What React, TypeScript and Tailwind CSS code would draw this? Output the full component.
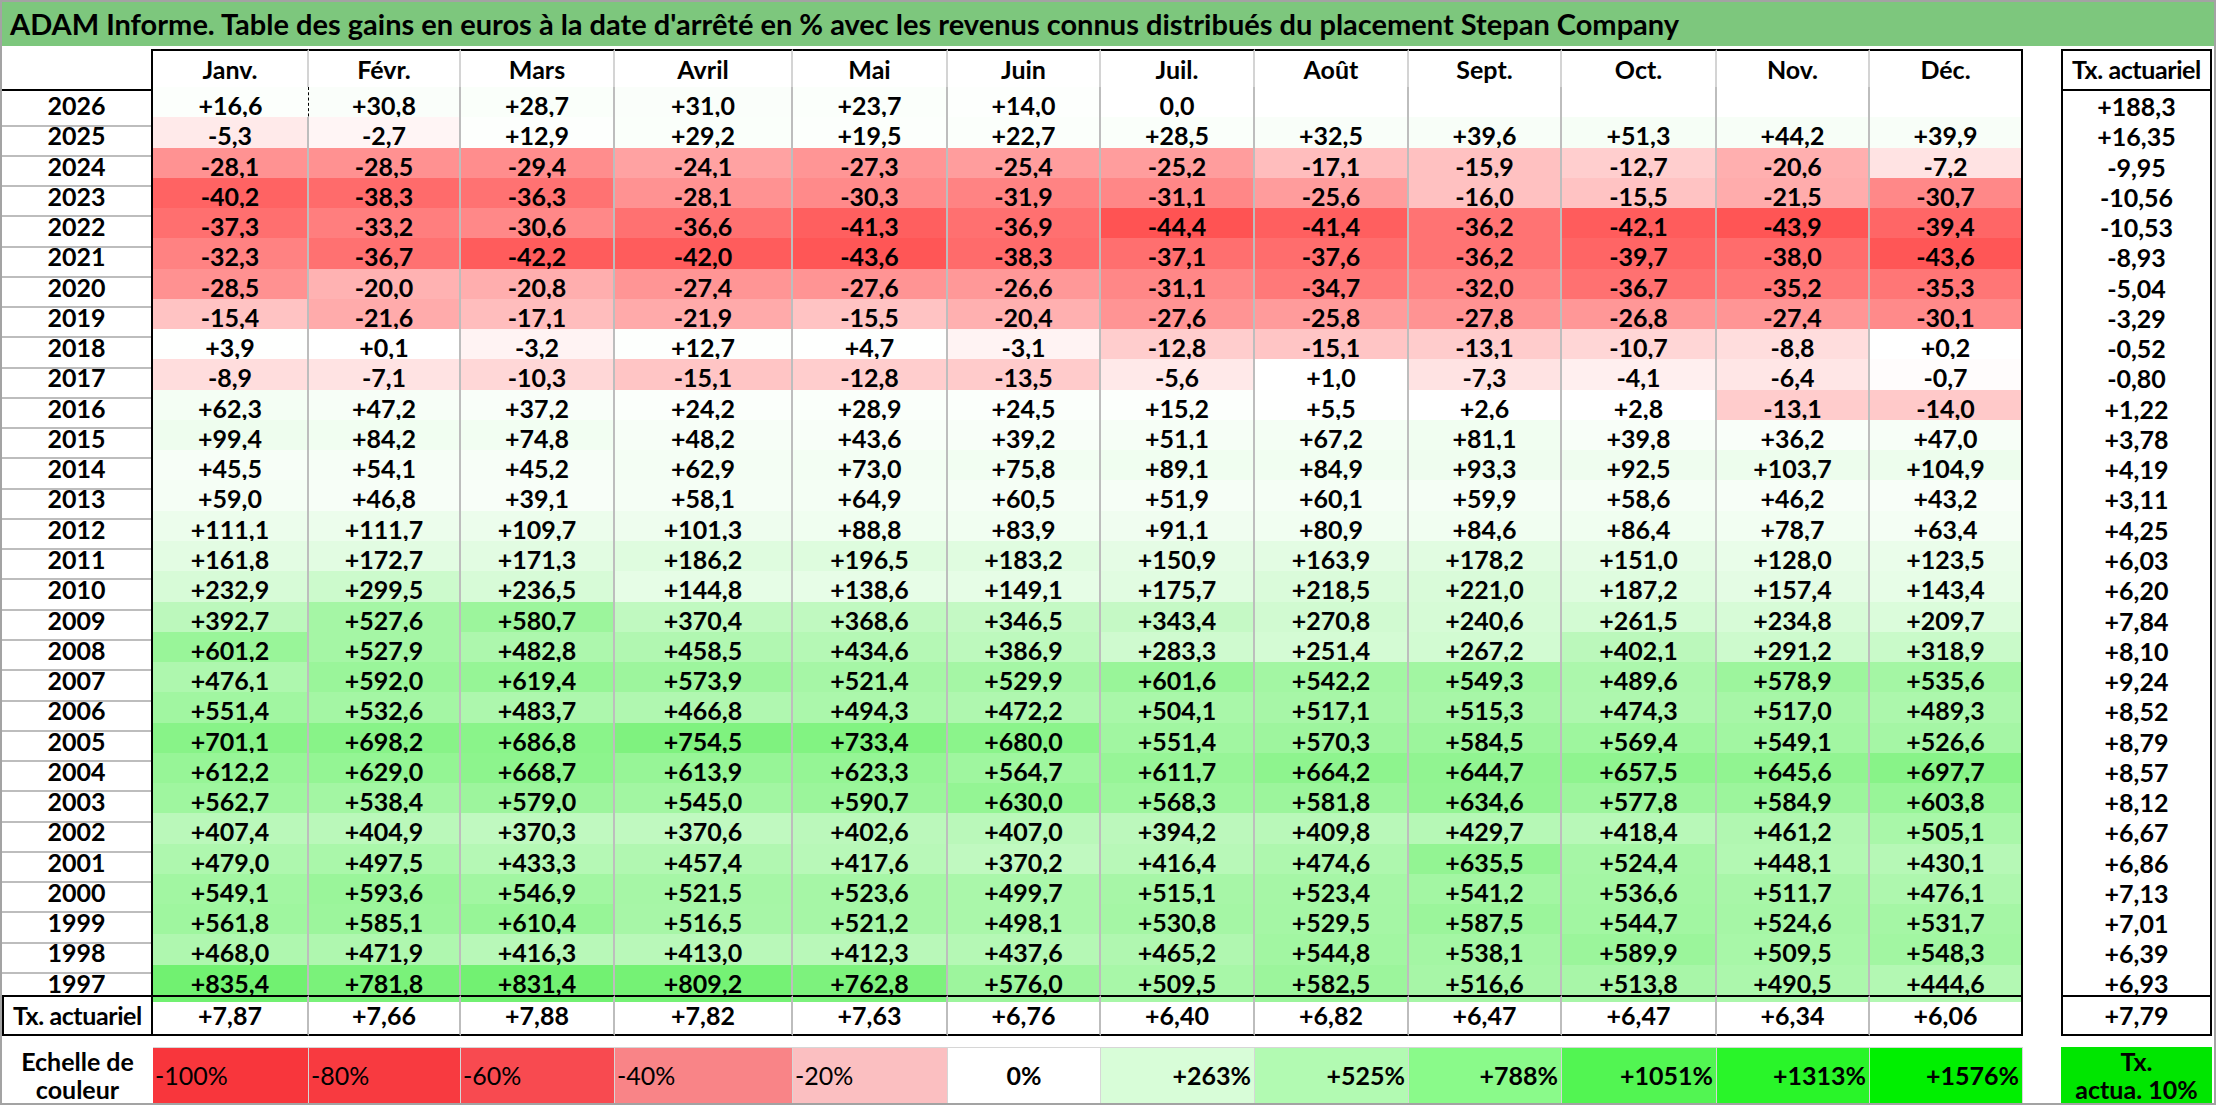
import React from "react"

type Row = { year: string; vals: (number | null)[]; labels: string[]; tx: string }

const MONTHS = ["Janv.", "Févr.", "Mars", "Avril", "Mai", "Juin", "Juil.", "Août", "Sept.", "Oct.", "Nov.", "Déc."]

const RAW: [string, string, string][] = [
  ["2026", "+16,6 +30,8 +28,7 +31,0 +23,7 +14,0 0,0 _ _ _ _ _", "+188,3"],
  ["2025", "-5,3 -2,7 +12,9 +29,2 +19,5 +22,7 +28,5 +32,5 +39,6 +51,3 +44,2 +39,9", "+16,35"],
  ["2024", "-28,1 -28,5 -29,4 -24,1 -27,3 -25,4 -25,2 -17,1 -15,9 -12,7 -20,6 -7,2", "-9,95"],
  ["2023", "-40,2 -38,3 -36,3 -28,1 -30,3 -31,9 -31,1 -25,6 -16,0 -15,5 -21,5 -30,7", "-10,56"],
  ["2022", "-37,3 -33,2 -30,6 -36,6 -41,3 -36,9 -44,4 -41,4 -36,2 -42,1 -43,9 -39,4", "-10,53"],
  ["2021", "-32,3 -36,7 -42,2 -42,0 -43,6 -38,3 -37,1 -37,6 -36,2 -39,7 -38,0 -43,6", "-8,93"],
  ["2020", "-28,5 -20,0 -20,8 -27,4 -27,6 -26,6 -31,1 -34,7 -32,0 -36,7 -35,2 -35,3", "-5,04"],
  ["2019", "-15,4 -21,6 -17,1 -21,9 -15,5 -20,4 -27,6 -25,8 -27,8 -26,8 -27,4 -30,1", "-3,29"],
  ["2018", "+3,9 +0,1 -3,2 +12,7 +4,7 -3,1 -12,8 -15,1 -13,1 -10,7 -8,8 +0,2", "-0,52"],
  ["2017", "-8,9 -7,1 -10,3 -15,1 -12,8 -13,5 -5,6 +1,0 -7,3 -4,1 -6,4 -0,7", "-0,80"],
  ["2016", "+62,3 +47,2 +37,2 +24,2 +28,9 +24,5 +15,2 +5,5 +2,6 +2,8 -13,1 -14,0", "+1,22"],
  ["2015", "+99,4 +84,2 +74,8 +48,2 +43,6 +39,2 +51,1 +67,2 +81,1 +39,8 +36,2 +47,0", "+3,78"],
  ["2014", "+45,5 +54,1 +45,2 +62,9 +73,0 +75,8 +89,1 +84,9 +93,3 +92,5 +103,7 +104,9", "+4,19"],
  ["2013", "+59,0 +46,8 +39,1 +58,1 +64,9 +60,5 +51,9 +60,1 +59,9 +58,6 +46,2 +43,2", "+3,11"],
  ["2012", "+111,1 +111,7 +109,7 +101,3 +88,8 +83,9 +91,1 +80,9 +84,6 +86,4 +78,7 +63,4", "+4,25"],
  ["2011", "+161,8 +172,7 +171,3 +186,2 +196,5 +183,2 +150,9 +163,9 +178,2 +151,0 +128,0 +123,5", "+6,03"],
  ["2010", "+232,9 +299,5 +236,5 +144,8 +138,6 +149,1 +175,7 +218,5 +221,0 +187,2 +157,4 +143,4", "+6,20"],
  ["2009", "+392,7 +527,6 +580,7 +370,4 +368,6 +346,5 +343,4 +270,8 +240,6 +261,5 +234,8 +209,7", "+7,84"],
  ["2008", "+601,2 +527,9 +482,8 +458,5 +434,6 +386,9 +283,3 +251,4 +267,2 +402,1 +291,2 +318,9", "+8,10"],
  ["2007", "+476,1 +592,0 +619,4 +573,9 +521,4 +529,9 +601,6 +542,2 +549,3 +489,6 +578,9 +535,6", "+9,24"],
  ["2006", "+551,4 +532,6 +483,7 +466,8 +494,3 +472,2 +504,1 +517,1 +515,3 +474,3 +517,0 +489,3", "+8,52"],
  ["2005", "+701,1 +698,2 +686,8 +754,5 +733,4 +680,0 +551,4 +570,3 +584,5 +569,4 +549,1 +526,6", "+8,79"],
  ["2004", "+612,2 +629,0 +668,7 +613,9 +623,3 +564,7 +611,7 +664,2 +644,7 +657,5 +645,6 +697,7", "+8,57"],
  ["2003", "+562,7 +538,4 +579,0 +545,0 +590,7 +630,0 +568,3 +581,8 +634,6 +577,8 +584,9 +603,8", "+8,12"],
  ["2002", "+407,4 +404,9 +370,3 +370,6 +402,6 +407,0 +394,2 +409,8 +429,7 +418,4 +461,2 +505,1", "+6,67"],
  ["2001", "+479,0 +497,5 +433,3 +457,4 +417,6 +370,2 +416,4 +474,6 +635,5 +524,4 +448,1 +430,1", "+6,86"],
  ["2000", "+549,1 +593,6 +546,9 +521,5 +523,6 +499,7 +515,1 +523,4 +541,2 +536,6 +511,7 +476,1", "+7,13"],
  ["1999", "+561,8 +585,1 +610,4 +516,5 +521,2 +498,1 +530,8 +529,5 +587,5 +544,7 +524,6 +531,7", "+7,01"],
  ["1998", "+468,0 +471,9 +416,3 +413,0 +412,3 +437,6 +465,2 +544,8 +538,1 +589,9 +509,5 +548,3", "+6,39"],
  ["1997", "+835,4 +781,8 +831,4 +809,2 +762,8 +576,0 +509,5 +582,5 +516,6 +513,8 +490,5 +444,6", "+6,93"],
]

const ROWS: Row[] = RAW.map(([year, s, tx]) => {
  const labels = s.split(" ").map((x) => (x === "_" ? "" : x))
  const vals = labels.map((x) => (x === "" ? null : parseFloat(x.replace(",", "."))))
  return { year, vals, labels, tx }
})

const TX_ROW = ["+7,87", "+7,66", "+7,88", "+7,82", "+7,63", "+6,76", "+6,40", "+6,82", "+6,47", "+6,47", "+6,34", "+6,06"]

const LEGEND = [
  { t: "-100%", bg: "#f8363c", al: "justify-start pl-[2px] font-normal" },
  { t: "-80%", bg: "#f83a40", al: "justify-start pl-[2px] font-normal" },
  { t: "-60%", bg: "#f84a50", al: "justify-start pl-[2px] font-normal" },
  { t: "-40%", bg: "#f98487", al: "justify-start pl-[2px] font-normal" },
  { t: "-20%", bg: "#fbbfc1", al: "justify-start pl-[2px] font-normal" },
  { t: "0%", bg: "#ffffff", al: "justify-center font-bold" },
  { t: "+263%", bg: "#d8fdd8", al: "justify-end pr-[3px] font-bold" },
  { t: "+525%", bg: "#b2fab2", al: "justify-end pr-[3px] font-bold" },
  { t: "+788%", bg: "#8afa8a", al: "justify-end pr-[3px] font-bold" },
  { t: "+1051%", bg: "#52f552", al: "justify-end pr-[3px] font-bold" },
  { t: "+1313%", bg: "#29f529", al: "justify-end pr-[3px] font-bold" },
  { t: "+1576%", bg: "#00f000", al: "justify-end pr-[3px] font-bold" },
]

// excel-like colour scale: red down to the worst loss, green up to +1576
function cellBg(v: number | null) {
  if (v === null || v === 0) return "#ffffff"
  if (v < 0) {
    const t = Math.min(1, -v / 44.4)
    const g = Math.round(255 - t * 172)
    return `rgb(255,${g},${g})`
  }
  const t = Math.min(1, v / 1500)
  const r = Math.round(255 * (1 - t))
  const g = Math.round(255 - t * 25)
  return `rgb(${r},${g},${r})`
}

const GRID =
  "grid grid-cols-[151px_156px_152px_154px_178px_155px_153px_154px_154px_153px_155px_153px_153px_38px_151px]"

export default function App() {
  return (
    <div className="w-[2216px] h-[1105px] bg-white border-2 border-[#a3a3a3] flex flex-col font-['Lato','Liberation_Sans',sans-serif] text-black overflow-hidden">
      {/* Title */}
      <div className="h-[44px] shrink-0 bg-[#7dc77d] flex items-center pl-[8px] text-[29px] font-bold whitespace-nowrap">
        ADAM Informe. Table des gains en euros à la date d'arrêté en % avec les revenus connus distribués du placement Stepan Company
      </div>

      <div className="mt-[3px] text-[25px] font-bold">
        {/* Header */}
        <div className={`${GRID} h-[38px]`}>
          <div className="border-b-2 border-r-2 border-black" />
          {MONTHS.map((m, i) => (
            <div
              key={m}
              className={`flex items-center justify-center border-t-2 border-b-2 border-black ${
                i === 11 ? "border-r-2 border-r-black" : "border-r-2 border-r-[#d4d4d4]"
              }`}
            >
              {m}
            </div>
          ))}
          <div />
          <div className="flex items-center justify-center border-2 border-black whitespace-nowrap tracking-[-0.4px]">
            Tx. actuariel
          </div>
        </div>

        {/* Body */}
        {ROWS.map((row, ri) => {
          const last = ri === ROWS.length - 1
          const bb = last ? "" : "border-b-2 border-b-[#bdbdbd]"
          return (
            <div key={row.year} className={`${GRID} h-[30.27px]`}>
              <div className={`flex items-center justify-center border-r-2 border-r-black ${bb}`}>{row.year}</div>
              {row.vals.map((v, i) => (
                <div
                  key={i}
                  style={{ backgroundColor: cellBg(v) }}
                  className={`flex items-center justify-center ${bb} ${
                    i === 11
                      ? "border-r-2 border-r-black"
                      : ri === 0 && i === 0
                      ? "border-r border-dashed border-r-black"
                      : "border-r-2 border-r-[#bdbdbd]"
                  }`}
                >
                  {row.labels[i]}
                </div>
              ))}
              <div />
              <div className="flex items-center justify-center border-x-2 border-black">{row.tx}</div>
            </div>
          )
        })}

        {/* Tx. actuariel row */}
        <div className={`${GRID} h-[38px]`}>
          <div className="flex items-center justify-center border-2 border-black whitespace-nowrap tracking-[-0.4px]">
            Tx. actuariel
          </div>
          {TX_ROW.map((t, i) => (
            <div
              key={i}
              className={`flex items-center justify-center border-y-2 border-black ${
                i === 11 ? "border-r-2 border-r-black" : "border-r-2 border-r-[#bdbdbd]"
              }`}
            >
              {t}
            </div>
          ))}
          <div />
          <div className="flex items-center justify-center border-2 border-black">+7,79</div>
        </div>

        {/* Colour scale */}
        <div className={`${GRID} h-[56px] mt-[14px]`}>
          <div className="flex items-center justify-center text-center leading-[28px]">
            Echelle de
            <br />
            couleur
          </div>
          {LEGEND.map((l) => (
            <div
              key={l.t}
              style={{ backgroundColor: l.bg }}
              className={`flex items-center border-r border-t border-[#d6d6d6] ${l.al}`}
            >
              {l.t}
            </div>
          ))}
          <div />
          <div className="flex items-center justify-center text-center leading-[28px] bg-[#00e600]">
            Tx.
            <br />
            actua. 10%
          </div>
        </div>
      </div>
    </div>
  )
}
